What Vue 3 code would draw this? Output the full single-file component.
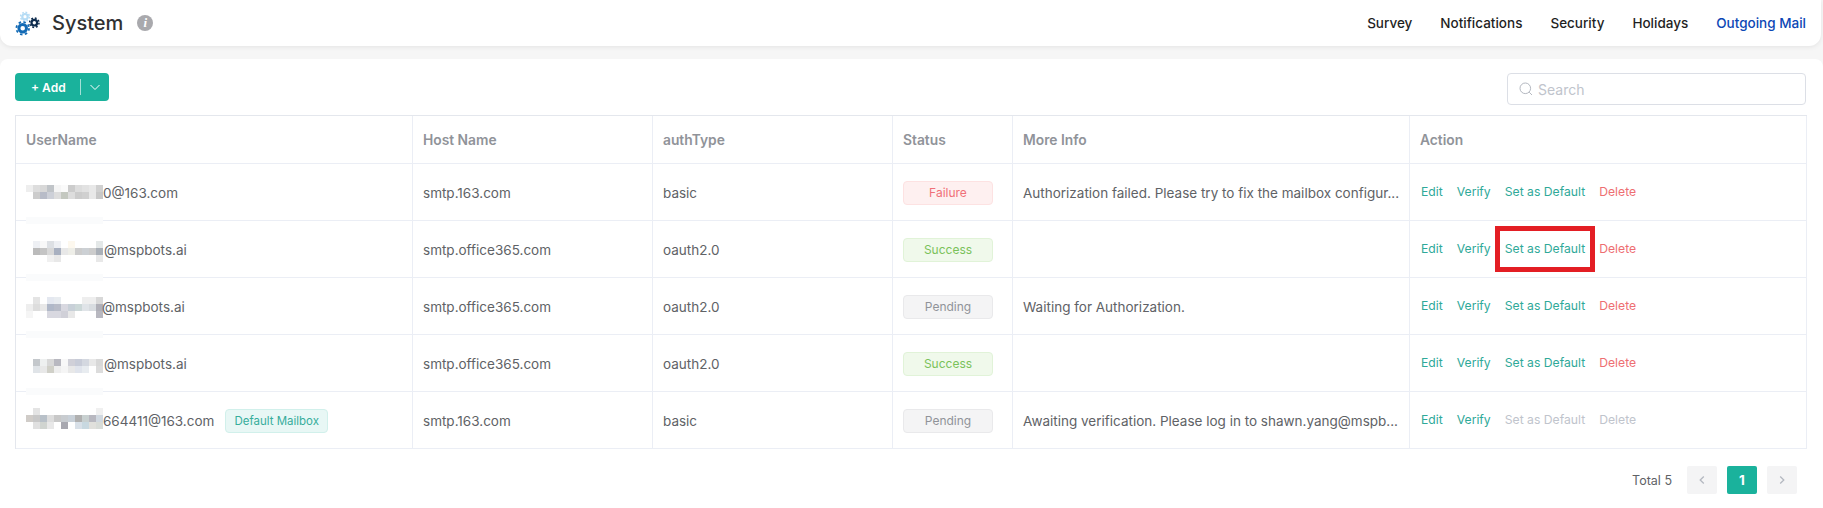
<script setup>
const W = '#fff'
const rows = [
  { pre: '0@163.com', gap: 0, top: 21, status: 'Failure', info: 'Authorization failed. Please try to fix the mailbox configur...', host: 'smtp.163.com', auth: 'basic',
    mosaic: [['#eee','#ddd','#d8d8d8','#c0c4c8','#f5f5f5','#fafafa','#ccc','#ddd','#e2e2e2','#e8e8e8','#d0d0d0'],
             [W,'#ccc','#b8bcc8','#cdd0d8','#ddd','#c4c8c0','#ddd','#ccc','#d0d0d0','#e8e8e8','#c8c8c8']] },
  { pre: '@mspbots.ai', gap: 1, top: 20, status: 'Success', info: '', host: 'smtp.office365.com', auth: 'oauth2.0', boxed: true,
    mosaic: [[W,'#eef0f4','#f8f8f8','#dde0e4','#eef0f4',W,'#fdf8ee',W,W,W,'#e4e8e8'],
             [W,'#bbb','#c4c4c4','#d8d8d8','#a8b0c0','#e8e8e8','#eeeee8','#ccc','#ccd0d4','#ccc','#aab0b8'],
             [W,W,W,'#f0f0f0','#e8e8e8',W,W,W,W,W,'#e8e8e8']] },
  { pre: '@mspbots.ai', gap: -1, top: 19, status: 'Pending', info: 'Waiting for Authorization.', host: 'smtp.office365.com', auth: 'oauth2.0',
    mosaic: [[W,'#e4e4e4',W,'#e4e8f0','#e8ecf0',W,W,W,'#eee','#eee','#d8d8d8'],
             ['#eee','#ddd','#e8e8e8','#b0b8c8','#b8bcc8','#d8d8e0','#c8d0d8','#ccd8d8','#e0e4e8','#d8dce0','#b0b0b8'],
             ['#f5f5f5',W,W,'#d8d8e0','#d8d8e0','#d0d0d8','#e8e8e8',W,W,W,'#b8b8c0']] },
  { pre: '@mspbots.ai', gap: 1, top: 24, status: 'Success', info: '', host: 'smtp.office365.com', auth: 'oauth2.0',
    mosaic: [[W,'#c4c8cc','#eef0f0','#d8d8d8','#b8b8c0','#f8f8f8','#d0d0d8','#c8ccd8','#d4d8e0','#e8e8e8','#d8d8d8'],
             [W,'#e0e4e8','#e8e8e8','#d0d0c8','#eee','#f5f5f5','#e8e8e8','#e0e4ec','#e8ecf0',W,'#dcdcdc']] },
  { pre: '664411@163.com', gap: 0, top: 16, status: 'Pending', info: 'Awaiting verification. Please log in to shawn.yang@mspb...', host: 'smtp.163.com', auth: 'basic', isDefault: true,
    mosaic: [[W,'#e4e4e4',W,W,W,W,W,W,W,W,'#f0f0f0'],
             ['#d0ccc8','#c8c8c8','#b8c0c8','#ddd','#c8c8c8','#c8ccd0','#c8d0d8','#b0b0b0','#c8d0d0','#b8b8c0','#d0d8e0'],
             [W,'#e0e0e0','#d0d4d0','#e8e8e8',W,'#a8a8b0',W,'#d8e0e8','#c8d8e0','#e0e0dc','#d8dcd8']] }
]
const cols = [397, 240, 240, 120, 397, 397]
const nav = ['Survey', 'Notifications', 'Security', 'Holidays', 'Outgoing Mail']
const heads = ['UserName', 'Host Name', 'authType', 'Status', 'More Info', 'Action']
</script>

<template>
  <div class="page">
    <header class="topbar">
      <div class="brand">
        <svg class="logo" width="34" height="30" viewBox="0 2 34 30">
          <g fill="none">
            <circle cx="16" cy="10.7" r="2.7" stroke="#b5dcf5" stroke-width="2.2" />
            <circle cx="16" cy="10.7" r="4.400" stroke="#b5dcf5" stroke-width="1.500" stroke-dasharray="1.750 1.700" />
            <circle cx="25.3" cy="16.7" r="2.800" stroke="#0e2c4e" stroke-width="2.200" />
            <circle cx="25.3" cy="16.7" r="4.700" stroke="#0e2c4e" stroke-width="1.500" stroke-dasharray="1.850 1.840" />
            <circle cx="13.7" cy="22.3" r="3.800" stroke="#126ab5" stroke-width="3" />
            <circle cx="13.7" cy="22.3" r="6.300" stroke="#126ab5" stroke-width="1.800" stroke-dasharray="2.470 2.480" />
          </g>
        </svg>
        <span class="title">System</span>
        <span class="info-dot">i</span>
      </div>
      <nav class="nav">
        <a v-for="(n, i) in nav" :key="n" :class="{ active: i === 4 }">{{ n }}</a>
      </nav>
    </header>

    <main class="content">
      <div class="toolbar">
        <div class="add">
          <span class="add-label">+ Add</span>
          <span class="add-sep"></span>
          <svg width="12" height="12" viewBox="0 0 12 12" class="add-chev"><path d="M1.500 4l4.500 4.500L10.500 4" fill="none" stroke="#fff" stroke-width="1" /></svg>
        </div>
        <div class="search">
          <svg width="14" height="14" viewBox="0 0 14 14"><circle cx="6.300" cy="6.300" r="5.300" fill="none" stroke="#b4b8c0" stroke-width="1" /><path d="M10.200 10.200L13 13" stroke="#b4b8c0" stroke-width="1" /></svg>
          <span>Search</span>
        </div>
      </div>

      <table class="grid">
        <colgroup><col v-for="(c, i) in cols" :key="i" :style="{ width: c + 'px' }" /></colgroup>
        <thead><tr><th v-for="h in heads" :key="h">{{ h }}</th></tr></thead>
        <tbody>
          <tr v-for="(r, i) in rows" :key="i">
            <td class="usercell">
              <div class="user">
                <div class="mosaic" :style="{ marginTop: r.top + 'px' }">
                  <div v-for="(line, j) in r.mosaic" :key="j" class="mline">
                    <i v-for="(c, k) in line" :key="k" :style="{ background: c }"></i>
                  </div>
                </div>
                <span class="mail" :style="{ marginLeft: r.gap + 'px' }">{{ r.pre }}</span>
                <span v-if="r.isDefault" class="badge">Default Mailbox</span>
                <span v-else class="ghost"></span>
              </div>
            </td>
            <td class="txt">{{ r.host }}</td>
            <td class="txt">{{ r.auth }}</td>
            <td><span class="tag" :class="r.status.toLowerCase()">{{ r.status }}</span></td>
            <td class="txt">{{ r.info }}</td>
            <td class="actcell">
              <div class="acts">
                <a class="ok">Edit</a>
                <a class="ok">Verify</a>
                <a :class="r.isDefault ? 'off' : 'ok'" class="setdef">Set as Default<span v-if="r.boxed" class="redbox"></span></a>
                <a :class="r.isDefault ? 'off' : 'bad'">Delete</a>
              </div>
            </td>
          </tr>
        </tbody>
      </table>

      <div class="pager">
        <span class="total">Total 5</span>
        <span class="pbtn"><svg width="10" height="10" viewBox="0 0 10 10"><path d="M6.800 1.500L3.200 5l3.600 3.500" fill="none" stroke="#b4b8c0" stroke-width="1.300" /></svg></span>
        <span class="pbtn cur">1</span>
        <span class="pbtn"><svg width="10" height="10" viewBox="0 0 10 10"><path d="M3.200 1.500L6.800 5 3.200 8.500" fill="none" stroke="#b4b8c0" stroke-width="1.300" /></svg></span>
      </div>
    </main>
  </div>
</template>

<style>
html, body { margin: 0; background: #fff; }
</style>

<style scoped>
.page {
  width: 1823px;
  height: 508px;
  overflow: hidden;
  background: #f6f6f6;
  font-family: Inter, "Liberation Sans", sans-serif;
  color: #606266;
}
.topbar {
  height: 46px;
  width: 1821px;
  display: flex;
  align-items: center;
  justify-content: space-between;
  background: #fff;
  border-radius: 0 0 12px 12px;
  box-shadow: 0 1px 5px rgba(0, 0, 0, 0.08);
  box-sizing: border-box;
  padding: 0 15px 0 9px;
}
.brand { display: flex; align-items: center; }
.logo { margin-top: -1px; }
.title { margin-left: 9px; font-size: 20px; font-weight: 500; color: #303133; }
.info-dot {
  margin-left: 14px;
  width: 16px;
  height: 16px;
  border-radius: 50%;
  background: #a9a9ad;
  color: #fff;
  font: italic bold 13px/16px "Liberation Serif", serif;
  text-align: center;
}
.nav { display: flex; gap: 28px; font-size: 13.5px; font-weight: 500; color: #1f1f1f; }
.nav .active { color: #0d47b5; }
.content {
  margin-top: 13px;
  height: 449px;
  background: #fff;
  border-radius: 8px 8px 0 0;
  box-sizing: border-box;
  padding: 14px 17px 0 15px;
}
.toolbar { display: flex; justify-content: space-between; align-items: flex-start; height: 32px; margin-bottom: 10px; }
.add {
  width: 94px;
  height: 28px;
  background: #1ab29c;
  border-radius: 4px;
  color: #fff;
  display: flex;
  align-items: center;
  font-size: 12px;
  font-weight: 600;
}
.add-label { margin-left: 16px; width: 49px; }
.add-sep { width: 1px; height: 16px; background: rgba(255, 255, 255, 0.6); }
.add-chev { margin-left: 8px; }
.search {
  width: 299px;
  height: 32px;
  box-sizing: border-box;
  border: 1px solid #dcdfe6;
  border-radius: 4px;
  display: flex;
  align-items: center;
  gap: 5px;
  padding-left: 11px;
  font-size: 14px;
  color: #c0c4cc;
}
.grid {
  width: 1791px;
  table-layout: fixed;
  border-collapse: separate;
  border-spacing: 0;
  border-top: 1px solid #e4e7ed;
  border-left: 1px solid #e4e7ed;
  font-size: 13.5px;
}
.grid th, .grid td {
  box-sizing: border-box;
  border-right: 1px solid #ebeef5;
  border-bottom: 1px solid #ebeef5;
  padding: 0 10px;
  text-align: left;
  white-space: nowrap;
  overflow: hidden;
}
.grid th { height: 48px; font-size: 13.8px; font-weight: 600; color: #909399; }
.grid td { height: 57px; }
.grid td.txt { padding-top: 2px; }
.grid td.usercell { overflow: visible; }
.grid td.actcell { overflow: visible; padding-left: 11px; }
.user { display: flex; align-items: center; height: 56px; position: relative; }
.mosaic { align-self: flex-start; flex: none; }
.mline { display: flex; height: 7px; }
.mline i { width: 7px; height: 7px; display: block; }
.mail { margin-top: 2px; }
.ghost {
  position: absolute;
  left: 0;
  bottom: -4px;
  width: 77px;
  height: 7px;
  background: #fafbfc;
}
.badge {
  margin: 2px 0 0 11px;
  height: 24px;
  line-height: 22px;
  box-sizing: border-box;
  padding: 0 8px;
  font-size: 11.5px;
  color: #37ad9c;
  background: #e8f7f5;
  border: 1px solid #d1f0eb;
  border-radius: 4px;
}
.tag {
  display: block;
  width: 90px;
  height: 24px;
  line-height: 22px;
  margin-top: 2px;
  box-sizing: border-box;
  text-align: center;
  font-size: 12px;
  border: 1px solid;
  border-radius: 4px;
}
.tag.failure { color: #f07078; background: #fef0f0; border-color: #fde2e2; }
.tag.success { color: #7ac25a; background: #f0f9eb; border-color: #e1f3d8; }
.tag.pending { color: #909399; background: #f4f4f5; border-color: #e9e9eb; }
.acts { display: flex; gap: 14px; font-size: 12.2px; padding-bottom: 2px; }
.ok { color: #2fa999; }
.bad { color: #ee6e72; }
.off { color: #c0c4cc; }
.setdef { position: relative; }
.redbox {
  position: absolute;
  left: -10px;
  right: -10px;
  top: -15px;
  height: 46px;
  box-sizing: border-box;
  border: 5px solid #e31e24;
}
.pager { margin-top: 17px; display: flex; justify-content: flex-end; align-items: center; padding-right: 9px; font-size: 12.5px; }
.total { margin-right: 15px; }
.pbtn {
  width: 30px;
  height: 28px;
  margin-left: 10px;
  background: #f4f4f5;
  border-radius: 2px;
  display: flex;
  align-items: center;
  justify-content: center;
}
.total + .pbtn { margin-left: 0; }
.pbtn.cur { background: #1ab29c; color: #fff; font-weight: 700; font-size: 13.5px; }
</style>
